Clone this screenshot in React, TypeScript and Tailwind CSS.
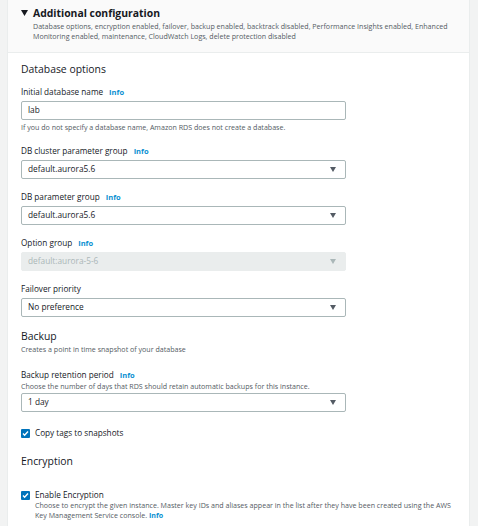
import React from 'react'

const font = { fontFamily: '"Open Sans", "Liberation Sans", sans-serif' }

function Info() {
  return <span className="ml-[6px] text-[7.5px] font-bold text-[#0a8fd1]">Info</span>
}

function Caret({ muted }: { muted?: boolean }) {
  return (
    <svg width="6" height="5" viewBox="0 0 6 5" className="shrink-0">
      <path d="M0 0h6L3 5z" fill={muted ? '#aab7b8' : '#545b64'} />
    </svg>
  )
}

function Select({ value, disabled }: { value: string; disabled?: boolean }) {
  return (
    <div
      className={
        'flex h-[19px] w-[325px] items-center justify-between rounded-[2px] border pl-[6px] pr-[9px] text-[8.3px] ' +
        (disabled ? 'border-[#eaeded] bg-[#eaeded] text-[#aab7b8]' : 'border-[#aab7b8] bg-white text-[#16191f]')
      }
    >
      <span>{value}</span>
      <Caret muted={disabled} />
    </div>
  )
}

function Field({ label, info, value, disabled }: { label: string; info?: boolean; value: string; disabled?: boolean }) {
  return (
    <div className="mb-[12px]">
      <div className="h-[12px] text-[8.2px] leading-[12px] text-[#16191f]">
        {label}
        {info && <Info />}
      </div>
      <div className="mt-[3px]">
        <Select value={value} disabled={disabled} />
      </div>
    </div>
  )
}

function Checkbox({ label }: { label: string }) {
  return (
    <div className="flex h-[10px] items-center gap-[5px] text-[8.2px] leading-[10px] text-[#16191f]">
      <span className="flex h-[9px] w-[9px] items-center justify-center rounded-[1px] bg-[#0073bb]">
        <svg width="7" height="7" viewBox="0 0 7 7">
          <path d="M1 3.6l1.6 1.6L6 1.6" stroke="white" strokeWidth="1.4" fill="none" />
        </svg>
      </span>
      {label}
    </div>
  )
}

export default function App() {
  return (
    <div className="flex h-[526px] w-[478px] overflow-hidden bg-[#f2f3f3]" style={font}>
      <div className="ml-[7px] w-[463px] border-x border-[#eaeded] bg-white">
        <div className="h-[53px] border-b border-[#eaeded] bg-[#fafafa] pl-[13px] pt-[6px]">
          <div className="flex items-center gap-[5px] text-[10.4px] font-bold leading-[14px] text-[#16191f]">
            <svg width="7" height="6" viewBox="0 0 7 6">
              <path d="M0 0h7L3.5 6z" fill="#16191f" />
            </svg>
            Additional configuration
          </div>
          <div className="mt-[1px] whitespace-nowrap pl-[12px] text-[7.1px] leading-[10px] text-[#545b64]">
            Database options, encryption enabled, failover, backup enabled, backtrack disabled, Performance Insights enabled, Enhanced
            <br />
            Monitoring enabled, maintenance, CloudWatch Logs, delete protection disabled
          </div>
        </div>

        <div className="pl-[13px]">
          <div className="mt-[9px] h-[14px] text-[10.4px] leading-[14px] text-[#16191f]">Database options</div>

          <div className="mt-[10px] h-[12px] text-[8.2px] leading-[12px] text-[#16191f]">
            Initial database name
            <Info />
          </div>
          <div className="mt-[3px] flex h-[19px] w-[325px] items-center rounded-[2px] border border-[#aab7b8] pl-[6px] text-[8.3px] text-[#16191f]">
            lab
          </div>
          <div className="mt-[2px] h-[10px] whitespace-nowrap text-[7.1px] leading-[10px] text-[#545b64]">
            If you do not specify a database name, Amazon RDS does not create a database.
          </div>

          <div className="mt-[13px]">
            <Field label="DB cluster parameter group" info value="default.aurora5.6" />
            <Field label="DB parameter group" info value="default.aurora5.6" />
            <Field label="Option group" info value="default:aurora-5-6" disabled />
            <Field label="Failover priority" value="No preference" />
          </div>

          <div className="mt-[7px] h-[14px] text-[10.4px] leading-[14px] text-[#16191f]">Backup</div>
          <div className="mt-[1px] h-[10px] whitespace-nowrap text-[7.1px] leading-[10px] text-[#545b64]">
            Creates a point in time snapshot of your database
          </div>

          <div className="mt-[15px] h-[12px] text-[8.2px] leading-[12px] text-[#16191f]">
            Backup retention period
            <Info />
          </div>
          <div className="h-[10px] whitespace-nowrap text-[7.1px] leading-[10px] text-[#545b64]">
            Choose the number of days that RDS should retain automatic backups for this instance.
          </div>
          <div className="mt-[2px]">
            <Select value="1 day" />
          </div>

          <div className="mt-[16px]">
            <Checkbox label="Copy tags to snapshots" />
          </div>

          <div className="mt-[16px] h-[14px] text-[10.4px] leading-[14px] text-[#16191f]">Encryption</div>

          <div className="mt-[22px]">
            <Checkbox label="Enable Encryption" />
          </div>
          <div className="whitespace-nowrap pl-[14px] text-[7.1px] leading-[10px] text-[#545b64]">
            Choose to encrypt the given instance. Master key IDs and aliases appear in the list after they have been created using the AWS
            <br />
            Key Management Service console. <span className="font-bold text-[#0a8fd1]">Info</span>
          </div>
        </div>
      </div>
    </div>
  )
}
